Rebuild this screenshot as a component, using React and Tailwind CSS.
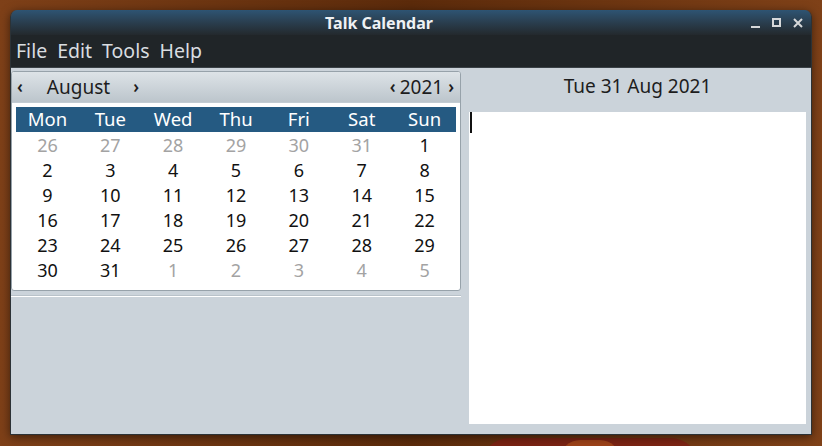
import React from "react"

const weeks = [
  [26, 27, 28, 29, 30, 31, 1],
  [2, 3, 4, 5, 6, 7, 8],
  [9, 10, 11, 12, 13, 14, 15],
  [16, 17, 18, 19, 20, 21, 22],
  [23, 24, 25, 26, 27, 28, 29],
  [30, 31, 1, 2, 3, 4, 5],
]
const dayNames = ["Mon", "Tue", "Wed", "Thu", "Fri", "Sat", "Sun"]

// other month days: first row before the 1st, last row after the 31st
const isOther = (w, d) => (w === 0 && d < 6) || (w === 5 && d > 1)

const Calendar = () => (
  <div className="w-[450px] h-[220px] rounded-[3px] border border-[#97a2aa] bg-white flex flex-col overflow-hidden">
    {/* month / year navigation */}
    <div className="h-[31px] shrink-0 flex items-center bg-gradient-to-b from-[#dde3e7] to-[#bcc5cc] text-[19px] text-[#1d1d1d] border-b border-[#c3ccd3]">
      <span className="ml-[5px] text-[17px] font-semibold">‹</span>
      <span className="ml-[24px]">August</span>
      <span className="ml-[23px] text-[17px] font-semibold">›</span>
      <div className="flex-1" />
      <span className="text-[17px] font-semibold">‹</span>
      <span className="ml-[4px]">2021</span>
      <span className="ml-[5px] mr-[6px] text-[17px] font-semibold">›</span>
    </div>
    <div className="px-[4px] pt-[4px]">
      <div className="grid grid-cols-7 h-[25px] bg-[#255a82] text-white text-[18.5px] items-center">
        {dayNames.map((n) => (
          <div key={n} className="text-center leading-none">{n}</div>
        ))}
      </div>
      {weeks.map((row, w) => (
        <div key={w} className="grid grid-cols-7 h-[25px] items-center text-[18px]">
          {row.map((d, i) => (
            <div
              key={i}
              className={
                "text-center leading-none " +
                (isOther(w, i) ? "text-[#a3a3a3]" : "text-[#111111]")
              }
            >
              {d}
            </div>
          ))}
        </div>
      ))}
    </div>
  </div>
)

export default function App() {
  return (
    <div
      className="w-[822px] h-[446px] overflow-hidden bg-gradient-to-r from-[#7e4018] via-[#5c2b0b] to-[#7f4118] pl-[10px] pt-[10px] relative"
      style={{ fontFamily: '"Noto Sans", "DejaVu Sans", sans-serif' }}
    >
      {/* wallpaper flame peeking under the window */}
      <div className="absolute left-[480px] top-[438px] w-[220px] h-[30px] rounded-t-[70px] bg-[#7e1f14] opacity-80" />
      <div className="absolute left-[560px] top-[440px] w-[60px] h-[20px] rounded-t-[30px] bg-[#b4561c] opacity-60" />

      <div className="relative w-[802px] h-[425px] flex flex-col rounded-t-[7px] overflow-hidden border-x border-b border-[#2c3236] shadow-[0_2px_10px_rgba(0,0,0,0.5)]">
        {/* title bar */}
        <div className="h-[25px] shrink-0 flex items-center bg-gradient-to-b from-[#2e5473] to-[#23292d] text-[#eef1f4] px-[8px]">
          <div className="flex-1 text-center font-bold text-[16px] pr-[12px]">Talk Calendar</div>
          <div className="flex items-center gap-[12px] text-[#d6d8da]">
            <div className="w-[9px] h-[2px] bg-[#d6d8da] mt-[8px]" />
            <div className="w-[9px] h-[9px] border-[2px] border-[#d6d8da]" />
            <svg width="10" height="10" viewBox="0 0 10 10">
              <path d="M1 1 L9 9 M9 1 L1 9" stroke="#d6d8da" strokeWidth="2" />
            </svg>
          </div>
        </div>

        {/* menu bar */}
        <div className="h-[33px] shrink-0 flex items-center gap-[10px] bg-[#202528] text-[#d9dde0] text-[19.5px] px-[5px] border-b border-[#3a4146]">
          <span>File</span>
          <span>Edit</span>
          <span>Tools</span>
          <span>Help</span>
        </div>

        {/* content */}
        <div className="flex-1 flex bg-[#cbd3da]">
          <div className="w-[451px] pt-[3px] flex flex-col">
            <Calendar />
            <div className="mt-[4px] h-[2px] w-[450px] border-t border-[#b9c2c9] bg-white" />
          </div>
          <div className="ml-[7px] flex-1 flex flex-col mr-[5px]">
            <div className="h-[44px] flex items-center justify-center text-[19px] text-[#1d1d1d] pb-[7px]">
              Tue 31 Aug 2021
            </div>
            <div className="flex-1 bg-white mb-[10px] relative">
              <div className="absolute left-[1px] top-0 w-[2px] h-[21px] bg-[#111]" />
            </div>
          </div>
        </div>
      </div>
    </div>
  )
}
